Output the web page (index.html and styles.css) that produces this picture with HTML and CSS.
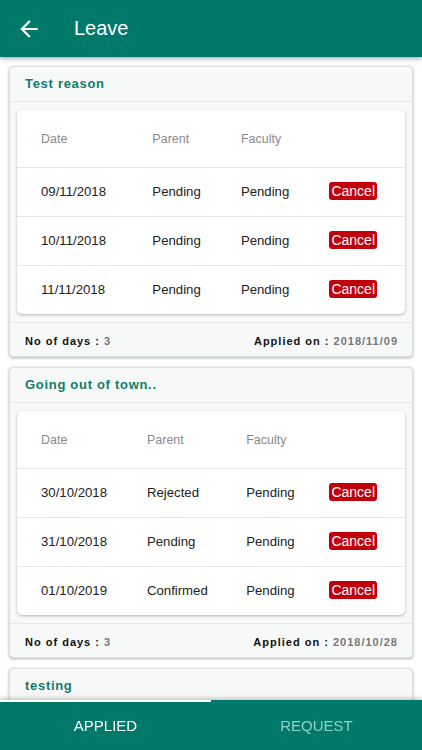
FILE: index.html
```html
<!DOCTYPE html>
<html>
<head>
<meta charset="utf-8">
<link rel="stylesheet" href="styles.css">
</head>
<body>
<header class="appbar">
  <svg class="back" width="26" height="26" viewBox="0 0 24 24"><path d="M20 11H7.83l5.59-5.59L12 4l-8 8 8 8 1.41-1.41L7.83 13H20v-2z" fill="#fff"/></svg>
  <span class="title">Leave</span>
</header>
<main class="list">
  <section class="card">
    <div class="card-head">Test reason</div>
    <div class="card-body">
      <table class="tbl">
        <thead><tr><th class="gap"></th><th>Date</th><th>Parent</th><th>Faculty</th><th class="act"></th></tr></thead>
        <tbody>
          <tr><td class="gap"></td><td>09/11/2018</td><td>Pending</td><td>Pending</td><td class="act"><span class="cancel">Cancel</span></td></tr>
          <tr><td class="gap"></td><td>10/11/2018</td><td>Pending</td><td>Pending</td><td class="act"><span class="cancel">Cancel</span></td></tr>
          <tr><td class="gap"></td><td>11/11/2018</td><td>Pending</td><td>Pending</td><td class="act"><span class="cancel">Cancel</span></td></tr>
        </tbody>
      </table>
    </div>
    <div class="card-foot"><span>No of days : <b class="val">3</b></span><span>Applied on : <b class="val">2018/11/09</b></span></div>
  </section>
  <section class="card">
    <div class="card-head">Going out of town..</div>
    <div class="card-body">
      <table class="tbl">
        <thead><tr><th class="gap"></th><th>Date</th><th>Parent</th><th>Faculty</th><th class="act"></th></tr></thead>
        <tbody>
          <tr><td class="gap"></td><td>30/10/2018</td><td>Rejected</td><td>Pending</td><td class="act"><span class="cancel">Cancel</span></td></tr>
          <tr><td class="gap"></td><td>31/10/2018</td><td>Pending</td><td>Pending</td><td class="act"><span class="cancel">Cancel</span></td></tr>
          <tr><td class="gap"></td><td>01/10/2019</td><td>Confirmed</td><td>Pending</td><td class="act"><span class="cancel">Cancel</span></td></tr>
        </tbody>
      </table>
    </div>
    <div class="card-foot"><span>No of days : <b class="val">3</b></span><span>Applied on : <b class="val">2018/10/28</b></span></div>
  </section>
  <section class="card">
    <div class="card-head">testing</div>
    <div class="card-body">
      <div class="tbl-empty"></div>
    </div>
  </section>
</main>
<nav class="tabs">
  <div class="tab active">APPLIED</div>
  <div class="tab">REQUEST</div>
</nav>
</body>
</html>
```
FILE: styles.css
```css
html, body { margin: 0; padding: 0; }
body {
  width: 422px; height: 750px; overflow: hidden;
  background: #fff;
  font-family: "Liberation Sans", Arial, sans-serif;
  color: #222;
}
.appbar {
  height: 57px; background: #00796b;
  display: flex; align-items: center;
  box-shadow: 0 2px 4px rgba(0,0,0,0.3);
  position: relative; z-index: 2;
}
.back { margin-left: 16px; }
.title { color: #fff; font-size: 20px; margin-left: 32px; }
.list { padding-top: 9px; }
.card {
  margin: 0 9px 10px;
  border: 1px solid #dcdfdf;
  border-radius: 4px;
  background: #f7f9f9;
  box-shadow: 0 1px 3px rgba(0,0,0,0.3);
}
.card-head {
  height: 32px; display: flex; align-items: center;
  padding: 0 15px 2px;
  border-bottom: 1px solid #e4e8e8;
  color: #137a6c; font-weight: bold; font-size: 13px; letter-spacing: 0.7px;
}
.card-body { padding: 8px 7px; border-bottom: 1px solid #e4e8e8; }
.tbl {
  width: 100%; border-collapse: separate; border-spacing: 0;
  background: #fff; border-radius: 5px;
  box-shadow: 0 1px 3px rgba(0,0,0,0.28);
}
.tbl-empty {
  height: 200px; background: #fff; border-radius: 5px;
  box-shadow: 0 1px 3px rgba(0,0,0,0.28);
}
.tbl th, .tbl td { box-sizing: border-box; }
.tbl th {
  height: 57px; text-align: left; font-weight: normal;
  color: #8a8a8a; font-size: 12.5px; padding: 0 16px 0 0;
}
.tbl td {
  height: 49px; border-top: 1px solid #e6e6e6;
  font-size: 13.2px; color: #222; padding: 0 16px 2px 0;
}
.tbl .gap { width: 24px; padding: 0; }
.tbl .act { width: 75px; padding: 0 28px 2px 0; }
.cancel {
  display: inline-block; background: #c2000b; color: #fff;
  font-size: 14px; line-height: 18px; padding: 0 2px; border-radius: 3px;
}
.card-foot {
  height: 31px; display: flex; align-items: center; justify-content: space-between;
  padding: 2px 14px 0 15px;
  font-size: 11px; font-weight: bold; letter-spacing: 1px; color: #111;
}
.val { color: #777; }
.tabs {
  position: fixed; left: 0; right: 0; bottom: 0; height: 50px;
  background: #00796b; display: flex;
  box-shadow: 0 -2px 4px rgba(0,0,0,0.2);
}
.tab {
  flex: 1; display: flex; align-items: center; justify-content: center;
  font-size: 15px; color: #8fd1c4; position: relative;
}
.tab.active { color: #fff; }
.tab.active::before {
  content: ""; position: absolute; left: 0; right: 0; top: 0; height: 2px; background: #fff;
}
```
